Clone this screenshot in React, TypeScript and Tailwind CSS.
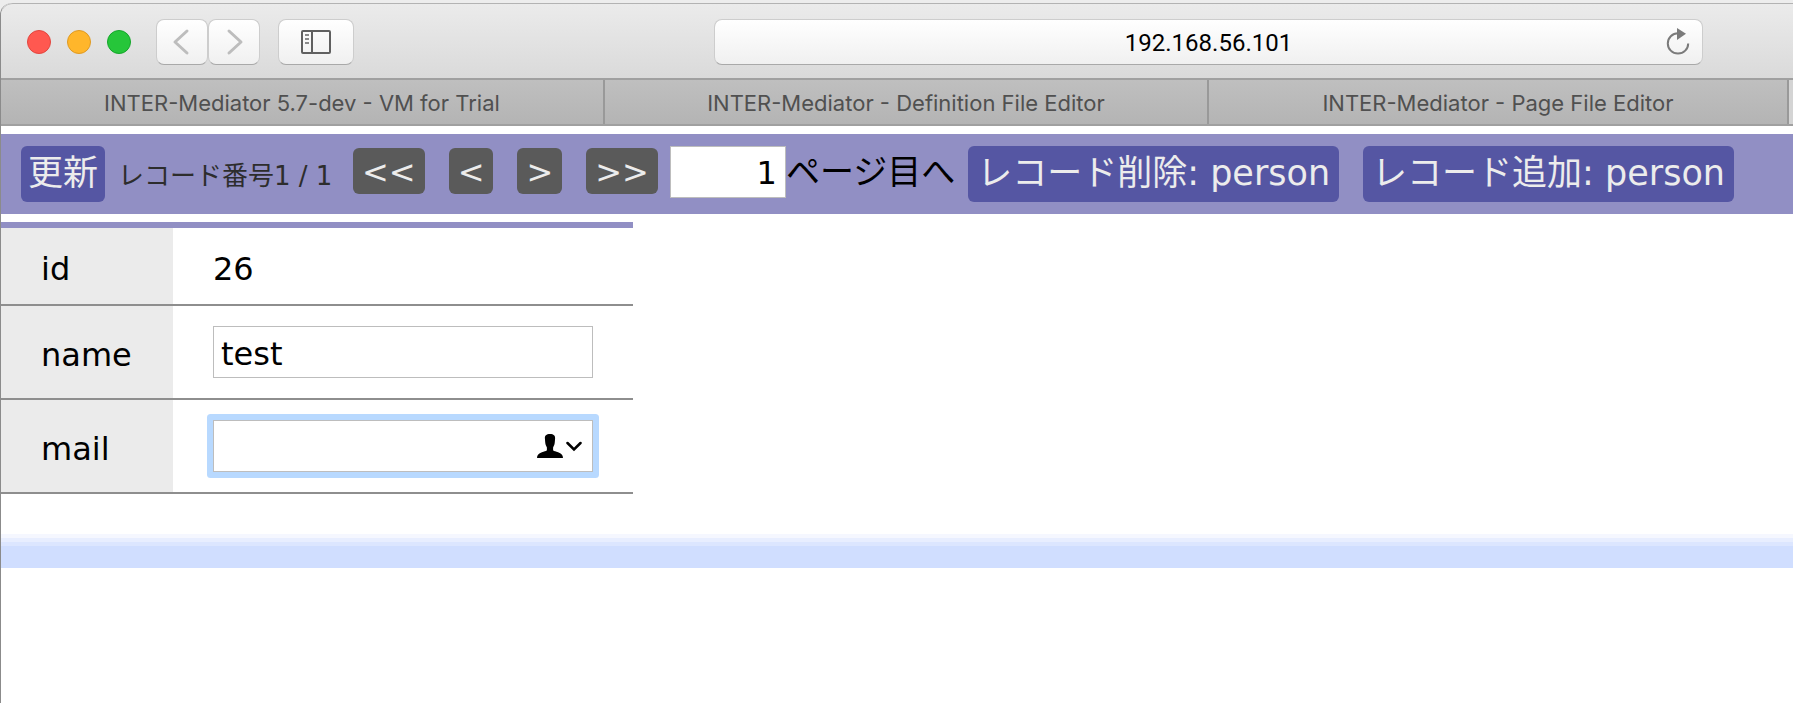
import React from 'react';

const tabs = [
  { title: 'INTER-Mediator 5.7-dev - VM for Trial', size: 'flex-[604_1_0%]' },
  { title: 'INTER-Mediator - Definition File Editor', size: 'flex-[604_1_0%]' },
  { title: 'INTER-Mediator - Page File Editor', size: 'flex-[580_1_0%]' },
];

const chromeButton =
  'flex h-[46px] items-center justify-center rounded-lg border border-[#cdcdcd] border-b-[#a9a9a9] bg-linear-to-b from-white to-[#f0f0f0]';

function Toolbar() {
  return (
    <header className="flex h-[75px] items-center rounded-tl-xl border-t border-[#b3b3b3] bg-linear-to-b from-[#ebebeb] to-[#dadada] pl-[26px] pr-[90px] pt-0.5">
      <div className="flex gap-4">
        <button aria-label="Close" className="size-6 rounded-full border border-[#e2463f] bg-[#ff5850]" />
        <button aria-label="Minimize" className="size-6 rounded-full border border-[#df9a23] bg-[#ffb62b]" />
        <button aria-label="Zoom" className="size-6 rounded-full border border-[#15a62b] bg-[#26c63a]" />
      </div>
      <div className="ml-[25px] flex">
        <button aria-label="Back" className={`${chromeButton} w-[52px]`}>
          <svg className="h-7 w-5" viewBox="0 0 20 28" fill="none" stroke="#bdbdbd" strokeWidth="3" strokeLinecap="round" strokeLinejoin="round">
            <path d="M15 3 3 14l12 11" />
          </svg>
        </button>
        <button aria-label="Forward" className={`${chromeButton} w-[52px]`}>
          <svg className="h-7 w-5" viewBox="0 0 20 28" fill="none" stroke="#bdbdbd" strokeWidth="3" strokeLinecap="round" strokeLinejoin="round">
            <path d="m5 3 12 11L5 25" />
          </svg>
        </button>
      </div>
      <button aria-label="Show sidebar" className={`${chromeButton} ml-[18px] w-[76px]`}>
        <svg className="h-6 w-[30px]" viewBox="0 0 30 24" fill="none" stroke="#606060" strokeWidth="2">
          <rect x="1" y="1" width="28" height="22" rx="1" />
          <path d="M11 1v22" />
          <path stroke="#8a8a8a" d="M4 5h4M4 9h4M4 13h4" />
        </svg>
      </button>
      <div className={`${chromeButton} ml-[360px] min-w-0 flex-1`}>
        <input
          aria-label="Address"
          defaultValue="192.168.56.101"
          className="h-full min-w-0 flex-1 bg-transparent pl-9 pt-0.5 text-center font-['Roboto',sans-serif] text-[24px] text-black outline-none"
        />
        <button aria-label="Reload" className="mr-3 flex">
          <svg className="h-7 w-6" viewBox="0 0 24 28" fill="none">
            <path d="M12 5.2A10.2 10.2 0 1 0 22.2 15.4" stroke="#7b7b7b" strokeWidth="2" />
            <path d="M11 0v12l9-6.3z" fill="#7b7b7b" />
          </svg>
        </button>
      </div>
    </header>
  );
}

function TabBar() {
  return (
    <nav aria-label="Tabs" className="flex h-12 border-y-2 border-[#a0a0a0] bg-linear-to-b from-[#bfbfbf] to-[#b4b4b4] font-['Inter',sans-serif] text-[22px] text-[#505050]">
      {tabs.map((tab) => (
        <button key={tab.title} className={`${tab.size} min-w-0 truncate border-r-2 border-[#999999] pt-0.5`}>
          {tab.title}
        </button>
      ))}
      <span className="w-1 bg-[#d4d4d4]" />
    </nav>
  );
}

const pageButton = 'h-[46px] rounded-md bg-[#5a5a5a] px-[9px] pt-0.5 text-[32px] leading-none text-[#ececec]';
const actionButton = 'h-14 rounded-md bg-[#5556a3] pb-0.5 text-[35px] leading-none text-[#ececec]';

function RecordNavigation() {
  return (
    <section aria-label="Record navigation" className="mt-2 flex h-20 items-start whitespace-nowrap bg-[#918fc4] pl-5 pt-3">
      <button className={`${actionButton} px-[7px]`}>更新</button>
      <span className="ml-[13px] mt-2.5 w-[235px] text-[26px] leading-10 text-[#2d2d2d]">レコード番号1 / 1</span>
      <div className="mt-0.5 flex gap-6">
        <button className={pageButton}>&lt;&lt;</button>
        <button className={pageButton}>&lt;</button>
        <button className={pageButton}>&gt;</button>
        <button className={pageButton}>&gt;&gt;</button>
      </div>
      <input
        id="page-number"
        defaultValue="1"
        className="ml-3 h-[52px] w-[116px] border border-[#bdbdbd] bg-white px-2 pt-0.5 text-right text-[32px] leading-none outline-none"
      />
      <label htmlFor="page-number" className="text-[34px] leading-[52px]">ページ目へ</label>
      <button className={`${actionButton} ml-[13px] px-[9px]`}>レコード削除: person</button>
      <button className={`${actionButton} ml-6 px-[9px]`}>レコード追加: person</button>
    </section>
  );
}

const heading = 'w-[172px] border-b-2 border-[#8e8e8e] bg-[#ebebeb] bg-clip-padding pl-10 pt-1.5 text-left font-normal';
const cell = 'border-b-2 border-[#8e8e8e] px-10';
const field = 'block h-[52px] w-full border border-[#bdbdbd] bg-white px-[7px] pt-1 text-[32px] leading-none outline-none';

function RecordTable() {
  return (
    <table className="mt-2 w-[632px] border-separate border-spacing-0 border-t-[6px] border-[#918fc4] text-[32px] leading-none">
      <tbody>
        <tr className="h-[78px]">
          <th scope="row" className={heading}>id</th>
          <td className={`${cell} pt-1.5`}>26</td>
        </tr>
        <tr className="h-[94px]">
          <th scope="row" className={heading}><label htmlFor="name">name</label></th>
          <td className={cell}><input id="name" defaultValue="test" className={field} /></td>
        </tr>
        <tr className="h-[94px]">
          <th scope="row" className={heading}><label htmlFor="mail">mail</label></th>
          <td className={cell}>
            <div className="relative rounded-[1px] ring-6 ring-[#b8d9ff]">
              <input id="mail" className={field} />
              <button aria-label="Fill from contacts" className="absolute right-[11px] top-[13px] flex items-center gap-[3px]">
                <svg className="h-[26px] w-[26px]" viewBox="0 0 26 26">
                  <path d="M13 1c-3.700 0-5.300 1.500-5.100 4.500l.3 3.800c.2 2 .7 3.300 1.700 5.100v2.900c-1 1.100-2.800 1-5 1.900C1.700 20.400 0 22 0 25h26c0-3-1.700-4.600-4.900-5.800-2.200-.9-4-.8-5-1.900v-2.900c1-1.800 1.500-3.100 1.700-5.100l.3-3.800C18.300 2.500 16.700 1 13 1z" fill="#000" />
                </svg>
                <svg className="h-[11px] w-4" viewBox="0 0 16 11" fill="none" stroke="#000" strokeWidth="2.5" strokeLinecap="round">
                  <path d="m1.500 2 6.500 6.500L14.500 2" />
                </svg>
              </button>
            </div>
          </td>
        </tr>
      </tbody>
    </table>
  );
}

export default function App() {
  return (
    <div className="min-h-screen bg-[#ededed] pt-[3px]">
      <div className="min-h-[calc(100vh-3px)] overflow-hidden rounded-tl-xl border-l border-[#8b8b8b] bg-white font-['DejaVu_Sans','Noto_Sans_CJK_JP',sans-serif] text-black">
        <Toolbar />
        <TabBar />
        <main>
          <RecordNavigation />
          <RecordTable />
          <div className="mt-10">
            <div className="h-1 bg-[#f5f7ff]" />
            <div className="h-1 bg-[#e8eeff]" />
            <div className="h-1 bg-[#dce6ff]" />
            <div className="h-[22px] bg-[#d0deff]" />
          </div>
        </main>
      </div>
    </div>
  );
}
